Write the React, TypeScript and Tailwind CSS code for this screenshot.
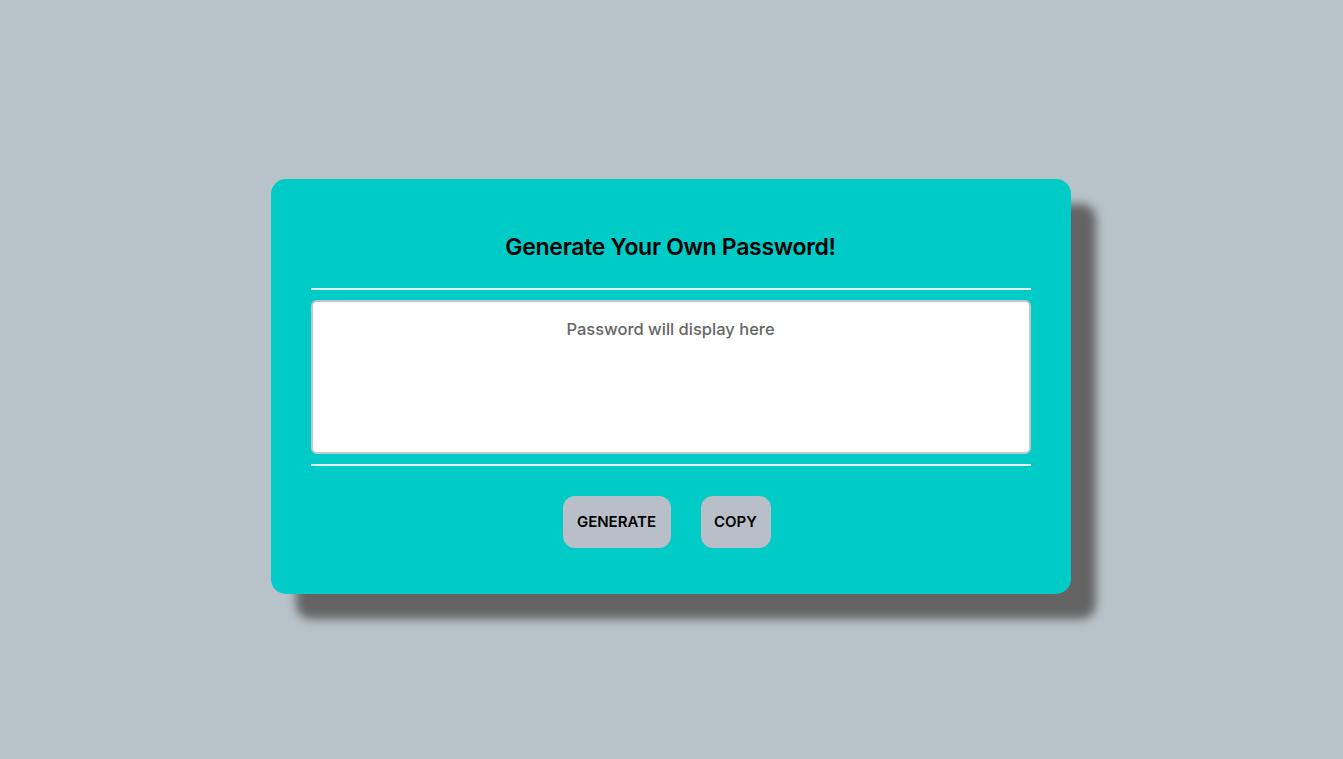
import React from "react";

export default function App() {
  return (
    <div
      className="min-h-screen w-full bg-[#b8c3c9] flex justify-center pt-[179px]"
      style={{ fontFamily: "Inter, 'Noto Sans', sans-serif" }}
    >
      <div className="relative -left-px w-[800px] h-[415px] bg-[#00cbc6] rounded-[15px] shadow-[25px_25px_10px_#646464] px-10 pt-[52px] flex flex-col">
        <h2 className="text-center text-[23px] leading-[32px] font-semibold text-black tracking-[-0.3px]">
          Generate Your Own Password!
        </h2>
        <div className="mt-[25px] h-[2px] bg-[#e6eef0]" />
        <div className="mt-[10px] h-[154px] bg-white border-2 border-[#c4c8cc] rounded-[6px] pt-[13px]">
          <p className="text-center text-[16.5px] leading-[28px] font-medium text-[#666]">
            Password will display here
          </p>
        </div>
        <div className="mt-[10px] h-[2px] bg-[#e6eef0]" />
        <div className="mt-[30px] flex justify-center gap-[30px] pr-[8px]">
          <button className="h-[52px] w-[108px] rounded-[12px] bg-[#b8bfc9] text-[15px] font-semibold text-black">
            GENERATE
          </button>
          <button className="h-[52px] w-[70px] rounded-[12px] bg-[#b8bfc9] text-[15px] font-semibold text-black">
            COPY
          </button>
        </div>
      </div>
    </div>
  );
}
